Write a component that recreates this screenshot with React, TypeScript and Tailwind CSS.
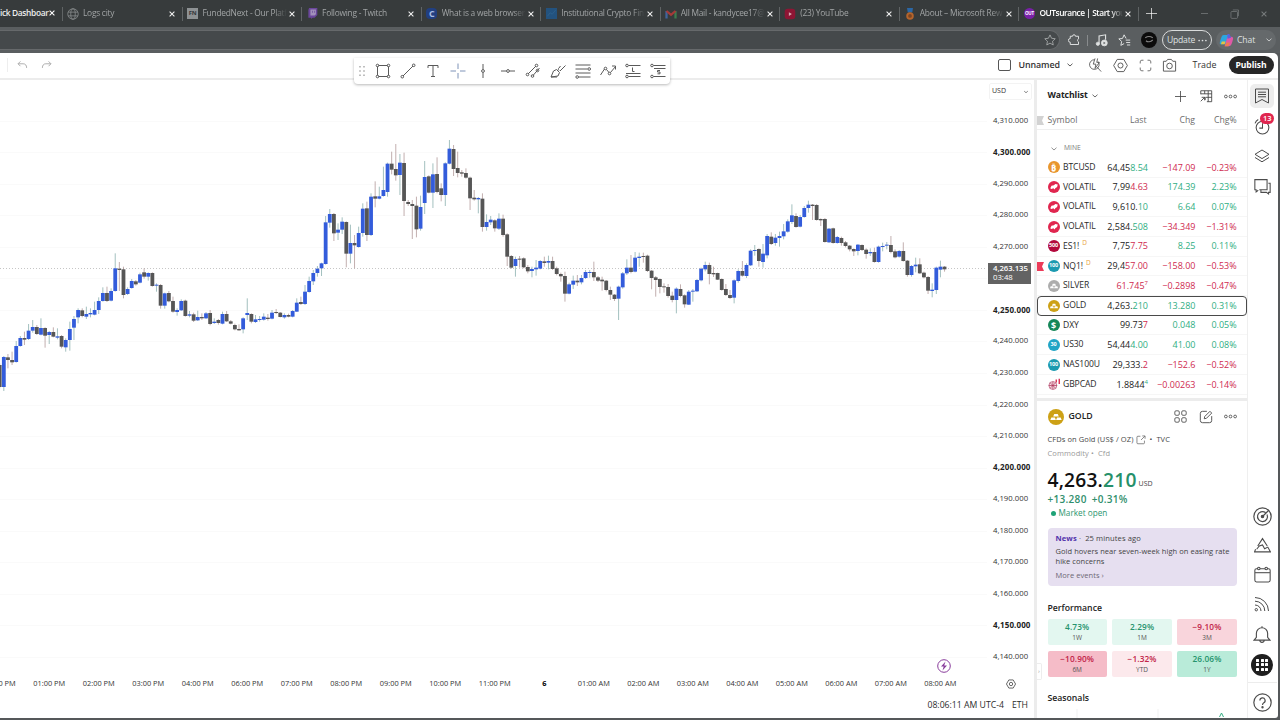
import type { ReactNode } from "react";
import clsx from "clsx";

const tabs = [
  { title: "Logs city", icon: "globe" },
  { title: "FundedNext - Our Platf", icon: "fn" },
  { title: "Following - Twitch", icon: "twitch" },
  { title: "What is a web browser", icon: "c" },
  { title: "Institutional Crypto Fin", icon: "chart" },
  { title: "All Mail - kandycee17@", icon: "gmail" },
  { title: "(23) YouTube", icon: "yt" },
  { title: "About – Microsoft Rew", icon: "medal" },
  { title: "OUTsurance | Start you", icon: "out", active: true },
];

const times = [
  "12:00 PM", "01:00 PM", "02:00 PM", "03:00 PM", "04:00 PM", "06:00 PM", "07:00 PM",
  "08:00 PM", "09:00 PM", "10:00 PM", "11:00 PM", "6", "01:00 AM", "02:00 AM", "03:00 AM",
  "04:00 AM", "05:00 AM", "06:00 AM", "07:00 AM", "08:00 AM",
];

const prices = Array.from({ length: 18 }, (_, i) => 4310 - i * 10);

type Row = {
  symbol: string;
  badge: string;
  color: string;
  last: string;
  tick: string;
  sup?: string;
  tickUp: boolean;
  chg: string;
  pct: string;
  delayed?: boolean;
  flag?: boolean;
};

const rows: Row[] = [
  { symbol: "BTCUSD", badge: "₿", color: "bg-[#e8962e]", last: "64,45", tick: "8.54", tickUp: true, chg: "−147.09", pct: "−0.23%" },
  { symbol: "VOLATIL", badge: "horse", color: "bg-[#e0264f]", last: "7,99", tick: "4.63", tickUp: false, chg: "174.39", pct: "2.23%" },
  { symbol: "VOLATIL", badge: "horse", color: "bg-[#e0264f]", last: "9,610.", tick: "10", tickUp: true, chg: "6.64", pct: "0.07%" },
  { symbol: "VOLATIL", badge: "horse", color: "bg-[#e0264f]", last: "2,584.", tick: "508", tickUp: true, chg: "−34.349", pct: "−1.31%" },
  { symbol: "ES1!", badge: "500", color: "bg-[#b3083c]", last: "7,75", tick: "7.75", tickUp: false, chg: "8.25", pct: "0.11%", delayed: true },
  { symbol: "NQ1!", badge: "100", color: "bg-[#1c9ab0]", last: "29,4", tick: "57.00", tickUp: false, chg: "−158.00", pct: "−0.53%", delayed: true, flag: true },
  { symbol: "SILVER", badge: "bars", color: "bg-[#adadad]", last: "", tick: "61.745", sup: "7", tickUp: false, chg: "−0.2898", pct: "−0.47%" },
  { symbol: "GOLD", badge: "bars", color: "bg-[#cda116]", last: "4,263.", tick: "210", tickUp: true, chg: "13.280", pct: "0.31%" },
  { symbol: "DXY", badge: "$", color: "bg-[#168758]", last: "99.73", tick: "7", tickUp: false, chg: "0.048", pct: "0.05%" },
  { symbol: "US30", badge: "30", color: "bg-[#22a5c6]", last: "54,44", tick: "4.00", tickUp: true, chg: "41.00", pct: "0.08%" },
  { symbol: "NAS100U", badge: "100", color: "bg-[#1c9ab0]", last: "29,333.", tick: "2", tickUp: false, chg: "−152.6", pct: "−0.52%" },
  { symbol: "GBPCAD", badge: "flags", color: "bg-transparent", last: "1.8844", tick: "", sup: "4", tickUp: true, chg: "−0.00263", pct: "−0.14%" },
];

const performance = [
  { value: "4.73%", label: "1W", box: "bg-[#e3f7f0]", text: "text-[#26936d]" },
  { value: "2.29%", label: "1M", box: "bg-[#e3f7f0]", text: "text-[#26936d]" },
  { value: "−9.10%", label: "3M", box: "bg-[#f9d5dc]", text: "text-[#c22448]" },
  { value: "−10.90%", label: "6M", box: "bg-[#f5bcc8]", text: "text-[#c22448]" },
  { value: "−1.32%", label: "YTD", box: "bg-[#fce9ec]", text: "text-[#c22448]" },
  { value: "26.06%", label: "1Y", box: "bg-[#b9ebd9]", text: "text-[#26936d]" },
];

// [open, close, high, low] in thirds of a pixel, measured down from y = 130
const candles = [
  [705,771,700,775],[771,681,678,783],[682,690,672,715],[690,697,665,705],[696,648,633,698],[648,624,618,650],
  [624,629,605,645],[627,602,582,630],[602,591,570,608],[591,612,585,615],[614,594,565,616],[594,617,592,653],
  [615,606,603,642],[606,620,592,622],[623,619,595,628],[618,650,615,655],[652,630,625,665],[630,597,575,662],
  [593,567,558,630],[562,540,535,580],[541,558,535,562],[560,552,530,567],[553,549,535,562],[554,540,515,556],
  [540,513,502,552],[513,489,472,515],[489,513,470,516],[512,483,475,514],[483,415,370,485],[416,420,396,483],
  [418,495,410,505],[492,477,472,495],[474,453,447,476],[454,463,450,467],[458,433,428,460],[427,440,415,446],
  [440,429,427,452],[429,468,427,470],[467,464,460,485],[465,527,462,536],[527,490,488,536],[489,514,483,517],
  [513,545,500,548],[546,540,535,557],[541,513,508,543],[512,558,509,560],[557,553,543,562],[553,572,548,576],
  [571,561,542,573],[561,565,550,570],[565,550,546,567],[549,582,540,586],[579,575,565,582],[570,579,567,584],
  [581,552,545,583],[552,574,543,576],[574,581,570,583],[585,598,581,601],[597,601,583,602],[598,565,562,610],
  [555,549,505,570],[552,575,550,580],[576,568,555,579],[570,567,558,575],[569,560,550,572],[563,567,552,572],
  [566,548,540,568],[546,549,537,552],[548,561,546,562],[562,555,550,566],[555,560,551,562],[560,543,540,562],
  [545,518,505,546],[516,522,500,525],[522,485,465,525],[486,453,440,488],[454,429,420,465],[429,416,408,440],
  [415,400,398,438],[402,277,258,404],[278,252,237,293],[252,310,249,333],[308,299,280,330],[299,275,262,312],
  [276,371,274,412],[371,339,284,400],[339,346,315,415],[351,309,290,353],[309,236,220,320],[235,315,215,333],
  [315,200,190,318],[199,206,154,232],[206,199,170,208],[198,180,110,200],[186,101,98,200],[101,119,65,133],
  [117,136,42,152],[135,98,72,195],[99,213,68,258],[216,222,210,228],[222,228,210,327],[227,298,200,322],
  [296,231,197,302],[219,141,93,252],[139,188,136,190],[188,133,100,234],[132,186,82,190],[175,195,160,214],
  [195,100,97,228],[101,56,30,103],[57,117,45,138],[114,129,65,142],[127,131,120,140],[129,143,115,146],
  [143,205,140,240],[203,208,180,212],[208,204,201,250],[206,291,190,305],[291,276,253,302],[277,269,258,285],
  [271,295,268,305],[296,266,250,300],[266,315,254,320],[313,380,310,408],[378,413,375,416],[408,387,380,440],
  [386,389,378,413],[385,412,382,415],[411,424,405,430],[423,417,410,442],[418,413,390,437],[416,393,390,418],
  [394,399,380,410],[398,393,377,418],[393,417,380,420],[415,432,410,436],[432,439,428,455],[438,491,425,515],
  [491,463,458,493],[464,452,437,477],[452,457,435,468],[457,444,435,463],[444,426,420,447],[429,426,420,443],
  [426,442,395,453],[442,452,438,456],[449,454,440,482],[452,480,450,484],[480,494,470,510],[494,507,492,513],
  [506,470,467,570],[472,430,426,476],[430,413,388,435],[413,426,375,430],[425,383,366,427],[384,380,368,410],
  [378,381,368,398],[377,423,374,426],[422,444,420,478],[442,450,438,500],[447,471,445,490],[469,472,460,488],
  [471,498,462,503],[497,510,485,517],[510,476,472,550],[477,498,463,502],[496,523,493,533],[524,485,480,525],
  [485,482,477,515],[484,450,447,486],[451,416,413,454],[418,405,395,424],[405,432,398,463],[429,433,410,441],
  [429,449,428,450],[447,480,445,482],[477,495,462,498],[495,504,480,507],[503,451,448,520],[453,423,418,458],
  [423,437,393,440],[438,405,400,444],[406,362,358,408],[363,360,345,377],[357,393,355,410],[396,371,342,413],
  [376,318,312,385],[320,342,307,345],[339,323,312,347],[324,318,305,350],[319,304,282,328],[305,274,268,308],
  [276,256,223,282],[258,291,250,293],[290,261,255,292],[261,234,228,263],[234,224,212,248],[224,228,222,270],
  [225,270,222,272],[267,271,265,288],[267,336,264,338],[337,296,294,339],[295,339,293,341],[339,321,318,341],
  [324,339,320,347],[337,348,333,352],[347,358,345,364],[357,364,355,378],[363,344,342,376],[345,360,343,363],
  [359,372,355,386],[370,366,355,378],[366,396,353,398],[396,350,347,398],[350,348,338,364],[347,344,336,358],
  [345,366,318,370],[364,382,358,385],[380,363,360,383],[363,393,337,395],[392,435,390,440],[435,408,405,440],
  [409,404,383,427],[403,430,385,432],[428,442,425,445],[441,482,438,492],[483,479,460,502],[480,413,410,492],
  [419,410,392,442],[410,418,408,425],
];

function Icon({ children, size = 16, className }: { children: ReactNode; size?: number; className?: string }) {
  return (
    <svg
      width={size}
      height={size}
      viewBox="0 0 16 16"
      fill="none"
      stroke="currentColor"
      strokeWidth={1}
      className={clsx("shrink-0", className)}
    >
      {children}
    </svg>
  );
}

function Chevron({ className }: { className?: string }) {
  return (
    <svg width="6" height="4" viewBox="0 0 6 4" fill="none" stroke="currentColor" strokeWidth={0.8} className={className}>
      <path d="M0.5 0.7 3 3 5.5 0.7" />
    </svg>
  );
}

function Dots() {
  return (
    <Icon size={13}>
      <circle cx="2.3" cy="8" r="1.7" />
      <circle cx="8" cy="8" r="1.7" />
      <circle cx="13.7" cy="8" r="1.7" />
    </Icon>
  );
}

function TabIcon({ name }: { name: string }) {
  if (name === "globe")
    return (
      <Icon size={12} className="text-[#8c9092]">
        <circle cx="8" cy="8" r="7" />
        <ellipse cx="8" cy="8" rx="3" ry="7" />
        <path d="M1.5 5.5h13M1.5 10.5h13" />
      </Icon>
    );
  if (name === "fn")
    return <span className="flex h-[11px] w-[11px] items-center justify-center bg-[#8e9294] text-[6px] font-bold text-[#34383a]">FN</span>;
  if (name === "twitch")
    return (
      <Icon size={11}>
        <path d="M3 0h12v10l-4 4H8l-2 2v-2H2V3z" fill="#6b479c" stroke="none" />
        <path d="M5 2h8v7l-2 2H5z" fill="#a191ba" stroke="none" />
        <path d="M8 4v3M11 4v3" stroke="#6b479c" />
      </Icon>
    );
  if (name === "c")
    return <span className="flex h-[11px] w-[11px] items-center justify-center rounded-sm bg-[#213f80] text-[9px] font-bold text-[#a7bde4]">C</span>;
  if (name === "chart")
    return (
      <Icon size={11}>
        <path d="M0 0h16v16H0z" fill="#23527e" stroke="none" />
        <path d="M2 12l4-5 3 2 5-6" stroke="#2f6490" />
      </Icon>
    );
  if (name === "gmail")
    return (
      <Icon size={12}>
        <path d="M2 14V4" stroke="#41649c" strokeWidth={3} />
        <path d="M14 14V4" stroke="#3d7d4e" strokeWidth={3} />
        <path d="M2 4l6 5 6-5" stroke="#a53a38" strokeWidth={3} />
      </Icon>
    );
  if (name === "yt")
    return (
      <Icon size={12}>
        <rect x="1" y="1" width="14" height="14" rx="4" fill="#8e1534" stroke="none" />
        <path d="M6.5 5.5l4 2.5-4 2.5z" fill="#d7a7b1" stroke="none" />
      </Icon>
    );
  if (name === "medal")
    return (
      <Icon size={12}>
        <path d="M4 0h8l-1 6H5z" fill="#2b67a5" stroke="none" />
        <circle cx="8" cy="10.5" r="5" fill="#b5642c" stroke="none" />
        <circle cx="8" cy="10.5" r="2.5" fill="#7c4522" stroke="none" />
      </Icon>
    );
  return <span className="flex h-[11px] w-[11px] items-center justify-center rounded-full bg-[#7a1fa8] text-[4.5px] font-bold text-white">OUT</span>;
}

function CloseX({ className }: { className?: string }) {
  return (
    <svg width="6" height="6" viewBox="0 0 7 7" fill="none" stroke="currentColor" strokeWidth={1.2} className={clsx("shrink-0", className)}>
      <path d="M0.7 0.7l5.6 5.600M6.300 0.700l-5.600 5.600" />
    </svg>
  );
}

function TabBar() {
  return (
    <div className="flex h-[27px] items-center bg-[#373b3c] text-[8.4px] tracking-[-0.25px] text-[#a2a5a6]">
      <div className="flex w-[62px] shrink-0 items-center">
        <span className="w-[45px] whitespace-nowrap font-semibold tracking-[-0.350px] text-[#eceded]">ick Dashboar</span>
        <CloseX className="ml-[4px] text-white" />
      </div>
      {tabs.map((tab) => (
        <div key={tab.title} className="flex h-[14px] w-[119.550px] shrink-0 items-center border-l border-[#606465] pl-[4px]">
          <span className="flex w-[12px] shrink-0 justify-center"><TabIcon name={tab.icon} /></span>
          <span
            className={clsx(
              "ml-[4px] w-[84px] whitespace-nowrap [mask-image:linear-gradient(to_right,black_85%,transparent)]",
              tab.active && "font-semibold tracking-[-0.450px] text-white",
            )}
          >
            {tab.title}
          </span>
          <CloseX className="ml-[2px] text-[#f1f1f1]" />
        </div>
      ))}
      <div className="flex h-[14px] flex-1 items-center border-l border-[#606465] pl-[7px]">
        <Icon size={11} className="text-white"><path d="M8 0v16M0 8h16" /></Icon>
        <span className="ml-[44px] h-px w-[7px] bg-[#686c6d]" />
        <Icon size={10} className="ml-[22px] text-[#85898a]">
          <rect x="1.500" y="4" width="10.500" height="11" rx="1.500" />
          <path d="M4.500 1.500h9v10" />
        </Icon>
        <CloseX className="ml-[21px] text-[#777b7c]" />
      </div>
    </div>
  );
}

function AddressBar() {
  return (
    <div className="flex h-[26px] items-center bg-[#5a5e60] text-[#dfe1e1]">
      <div className="flex h-[20px] w-[1060px] items-center justify-end rounded-r-full border border-l-0 border-[#66696b] bg-[#45494b] pr-[3px]">
        <Icon size={12} className="text-[#b7b9ba]">
          <path d="M8 1.200l2.100 4.500 4.900.6-3.600 3.400.9 4.900L8 12.200l-4.300 2.400.9-4.900L1 6.300l4.900-.6z" />
        </Icon>
      </div>
      <Icon size={12} className="ml-[8px]">
        <path d="M3 3h3a2 2 0 0 1 4 0h4v3.500a2.200 2.200 0 0 0 0 4V14H3v-3a2.200 2.200 0 0 1 0-5z" strokeWidth={1.3} />
      </Icon>
      <span className="ml-[7px] h-[11px] w-px bg-[#888b8d]" />
      <Icon size={13} className="ml-[7px]">
        <path d="M5 12V2.500l8-1.500v6" strokeWidth={1.4} />
        <circle cx="3.500" cy="12" r="2" fill="currentColor" />
        <circle cx="11.500" cy="11" r="3.600" fill="currentColor" />
        <path d="M10.500 9.500v3l2.500-1.500z" fill="#55595b" stroke="none" />
      </Icon>
      <Icon size={13} className="ml-[10px]">
        <path d="M10 5.500L7.500 1 5.500 5.500 1 6l3.500 3.200L3.500 14l4-2.200M9.500 7.500H15M10 10.500h5M11 13.500h4" strokeWidth={1.2} />
      </Icon>
      <div className="ml-[10px] flex h-[16px] w-[16px] items-center justify-center rounded-full bg-[#0b0b0b]">
        <Icon size={12} className="text-[#858585]">
          <path d="M3 5c3-2 7-2 10 0M4 9c2 2 6 2 9-1" strokeWidth={1.5} />
        </Icon>
      </div>
      <div className="ml-[5px] flex h-[20px] w-[50px] items-center justify-center gap-[3px] rounded-full border-[1.500px] border-[#d9dbdb] text-[8.600px] tracking-[-0.200px]">
        Update
        <Icon size={9}>
          <g fill="currentColor" stroke="none"><circle cx="2" cy="8" r="1.500" /><circle cx="8" cy="8" r="1.500" /><circle cx="14" cy="8" r="1.500" /></g>
        </Icon>
      </div>
      <div className="ml-[4px] flex h-[20px] w-[60px] items-center rounded-full bg-[#65696b] pl-[3px] text-[8.600px] tracking-[-0.100px]">
        <Icon size={15}>
          <path d="M5 2h5L7 12H2c-2 0-1-3 0-6s1.500-4 3-4z" fill="#2ba6df" stroke="none" />
          <path d="M3 9h4l-1 3H2z" fill="#e2c442" stroke="none" />
          <path d="M9 4h4c3 0 2 3 1 6s-2 4-4 4H6z" fill="#df59a7" stroke="none" />
          <path d="M9 1h2l2 4-4 1z" fill="#5b62dc" stroke="none" />
          <path d="M8 10h4l-2 4H6z" fill="#ee7b50" stroke="none" />
        </Icon>
        <span className="ml-[3px] w-[25px]">Chat</span>
        <Chevron className="ml-[4px]" />
      </div>
    </div>
  );
}

function DrawingTools() {
  return (
    <div className="absolute left-[354px] top-[5px] flex h-[26px] w-[316px] items-center gap-[9px] rounded-b-[4px] bg-white text-[#5a5a5a] shadow-[0_1px_3px_rgba(0,0,0,0.28)]">
      <Icon className="-mr-[4.500px] text-[#9c9c9c]">
        <path d="M6 3v10M10 3v10" strokeDasharray="1.500 2.700" strokeWidth={1.3} />
      </Icon>
      <Icon>
        <path d="M3.500 2.500h9M3.500 13.500h9M2.500 3.500v9M13.500 3.500v9" />
        <circle cx="2.500" cy="2.500" r="1.300" /><circle cx="13.500" cy="2.500" r="1.300" />
        <circle cx="2.500" cy="13.500" r="1.300" /><circle cx="13.500" cy="13.500" r="1.300" />
      </Icon>
      <Icon>
        <path d="M3 13L13 3" />
        <circle cx="2.300" cy="13.700" r="1.300" /><circle cx="13.700" cy="2.300" r="1.300" />
      </Icon>
      <Icon><path d="M3 5V2.500h10V5M8 2.500v11M6 13.500h4" /></Icon>
      <Icon className="text-[#7f93b8]"><path d="M8 0.500v5.500M8 10v5.500M0.500 8H6M10 8h5.500" /></Icon>
      <Icon><path d="M8 1v5.500M8 9.500V15" /><circle cx="8" cy="8" r="1.400" /></Icon>
      <Icon><path d="M1 8h5.500M9.500 8H15" /><circle cx="8" cy="8" r="1.400" /></Icon>
      <Icon>
        <path d="M3 11l8-8M8 12.500L14.500 5" />
        <circle cx="2.500" cy="11.500" r="1.300" /><circle cx="11.500" cy="2.500" r="1.300" />
        <circle cx="7.500" cy="13" r="1.300" /><circle cx="12.500" cy="7.500" r="1.300" />
      </Icon>
      <Icon>
        <path d="M1 14l2.500-6 3-1.500 3 3L8 13zM1 14h6M9 7.500a1.500 1.500 0 0 1 0-2.500L10.500 3M10 8l5.500-5.500" />
      </Icon>
      <Icon>
        <path d="M0.500 2h15M0.500 6h12M0.500 10h15M4 14h11.500" />
        <circle cx="14.200" cy="6" r="1.300" /><circle cx="2.200" cy="14" r="1.300" />
      </Icon>
      <Icon>
        <path d="M0.500 12l4-6M6.500 6.500L9 9.500M10.500 9.500l5-6M12 3h3.500v3.500" />
        <circle cx="5.500" cy="5.500" r="1.300" /><circle cx="9.500" cy="10.500" r="1.300" />
      </Icon>
      <Icon>
        <path d="M3.500 2.500h12M3.500 13.500h12M1 10.500h14.500M7.500 4.500v4h2" />
        <circle cx="2" cy="2.500" r="1.300" /><circle cx="2" cy="13.500" r="1.300" />
      </Icon>
      <Icon>
        <path d="M3.500 2.500h12M4 5.500h11.500M3.500 13.500h12M10 7.500H7.500v1.500H10v1.800H7.500" />
        <circle cx="2" cy="2.500" r="1.300" /><circle cx="2" cy="13.500" r="1.300" />
      </Icon>
    </div>
  );
}

function TopBar() {
  return (
    <div className="relative flex h-[27px] shrink-0 items-center border-b-2 border-[#ececec] pb-px pr-[4px] text-[8.900px] text-[#333]">
      <span className="ml-[7px] h-[14px] w-px bg-[#eee]" />
      <Icon size={11} className="ml-[9px] text-[#8a8a8a]"><path d="M5 2L1.500 5.500 5 9M2 5.500h7c3 0 5 2 5 6" /></Icon>
      <Icon size={11} className="ml-[13px] text-[#8a8a8a]"><path d="M11 2l3.500 3.500L11 9M14 5.500H7c-3 0-5 2-5 6" /></Icon>
      <DrawingTools />
      <div className="ml-auto flex items-center">
        <span className="h-[12px] w-[13px] rounded-[2px] border border-[#555]" />
        <span className="ml-[8px] w-[40px] font-semibold tracking-[-0.100px]">Unnamed</span>
        <Chevron className="ml-[8px]" />
        <Icon size={14} className="ml-[15px] text-[#555]">
          <path d="M11.500 4a5.500 5.500 0 1 1-4-2M10.500 10.500L15 15.500M8 0.500L6 7h3l-1 5 5-7h-3l1-4.500" />
        </Icon>
        <Icon size={15} className="ml-[11px] text-[#555]">
          <path d="M4.500 1.500h7L15.300 8l-3.800 6.500h-7L0.700 8z" /><circle cx="8" cy="8" r="2.700" />
        </Icon>
        <Icon size={13} className="ml-[11px] text-[#555]">
          <path d="M1.500 5.500v-2a2 2 0 0 1 2-2h2M10.500 1.500h2a2 2 0 0 1 2 2v2M14.500 10.500v2a2 2 0 0 1-2 2h-2M5.500 14.500h-2a2 2 0 0 1-2-2v-2" />
        </Icon>
        <Icon size={15} className="ml-[10px] text-[#555]">
          <path d="M1.500 3.500h3L6 1.500h4l1.500 2h3v10.500h-13z" /><circle cx="8" cy="8.500" r="3" />
        </Icon>
        <span className="ml-[16px] w-[24px] font-medium">Trade</span>
        <span className="ml-[12px] flex h-[18px] w-[45px] items-center justify-center rounded-full bg-[#262626] text-[8.600px] font-bold tracking-[-0.100px] text-white">
          Publish
        </span>
      </div>
    </div>
  );
}

function Chart() {
  return (
    <svg width="987" height="594" viewBox="0 80 987 594" className="block">
      {prices.map((p, i) => (
        <path key={p} d={`M0 ${Math.round(120.5 + i * 31.56) + 0.5}H987`} stroke="#fafafa" />
      ))}
      <path d="M0 268.500H987" stroke="#c6c6c6" strokeDasharray="1 2" />
      {candles.map(([open, close, high, low], i) => {
        const x = -0.3 + i * 4.126;
        const up = close < open;
        const top = 130 + Math.min(open, close) / 3;
        return (
          <g key={i}>
            <path
              d={`M${x} ${130 + high / 3}V${130 + low / 3}`}
              stroke={up ? "#7ba5a3" : "#a88d8d"}
              strokeWidth={0.7}
            />
            <rect
              x={x - 1.9}
              y={top}
              width={3.8}
              height={Math.max(Math.abs(open - close) / 3, 1)}
              fill={up ? "#335cdb" : "#565656"}
            />
          </g>
        );
      })}
      <circle cx="944" cy="666" r="6.300" fill="none" stroke="#8a3d9c" />
      <path d="M945.500 661.500l-4.500 5h2.700l-1.200 4 4.500-5h-2.800z" fill="#8a3d9c" />
    </svg>
  );
}

function PriceScale() {
  return (
    <div className="relative flex w-[47px] flex-col pl-[2px] text-[7.750px] font-medium text-[#333]">
      <div className="mt-[3px] flex h-[17px] w-[43px] items-center justify-between rounded-[2px] border border-[#f3f3f3] pl-[2px] pr-[2px] text-[7px]">
        USD
        <Chevron className="scale-75" />
      </div>
      <div className="mt-[4.700px] pl-[4px]">
        {prices.map((p) => (
          <div key={p} className={clsx("flex h-[31.560px] items-center", p % 50 === 0 && "text-[8px] font-bold text-[#222] tracking-[0.100px]")}>
            {p.toLocaleString("en-US")}.000
          </div>
        ))}
      </div>
      <div className="absolute left-px top-[183px] flex h-[21px] w-[43px] flex-col justify-center bg-[#636363] pl-[5px] text-[7.750px] leading-[9px] text-white">
        <span className="-mt-px font-semibold tracking-[-0.050px]">4,263.135</span>
        <span className="font-normal">03:48</span>
      </div>
    </div>
  );
}

function ChartArea() {
  return (
    <div className="flex w-[1034px] shrink-0 flex-col overflow-hidden">
      <div className="flex h-[594px] overflow-hidden">
        <Chart />
        <PriceScale />
      </div>
      <div className="flex h-[20px] items-center text-[7.400px] font-medium text-[#333]">
        <div className="-ml-[25px] flex w-[1012px] shrink-0">
          {times.map((t) => (
            <span key={t} className={clsx("w-[49.500px] shrink-0 whitespace-nowrap text-center", t === "6" && "font-bold text-black")}>{t}</span>
          ))}
        </div>
        <Icon size={10} className="ml-[19px] text-[#555]">
          <path d="M4.500 1.500h7L15.300 8l-3.800 6.500h-7L0.700 8z" strokeWidth={1.4} /><circle cx="8" cy="8" r="2.700" strokeWidth={1.4} />
        </Icon>
      </div>
      <div className="flex h-[24px] items-center justify-end gap-[8px] pb-px pr-[6px] text-[8.700px] font-medium text-[#2c2c2c]">
        <span>08:06:11 AM UTC-4</span>
        <span>ETH</span>
      </div>
    </div>
  );
}

function Bars({ size }: { size: number }) {
  return (
    <Icon size={size}>
      <path d="M6 4.500h4l1.200 3H4.800zM2.700 8.500h4l1.200 3H1.500zM9.300 8.500h4l1.200 3H8.100z" fill="white" stroke="none" />
    </Icon>
  );
}

function SymbolBadge({ badge, color }: { badge: string; color: string }) {
  return (
    <span className={clsx("flex h-[12px] w-[12px] shrink-0 items-center justify-center rounded-full text-white", color)}>
      {badge === "horse" && (
        <Icon size={10}>
          <path d="M2 10l2-4 4-1 2-2 4 1-1 4-3 2-1 2-2-2-3 1z" fill="white" stroke="none" />
        </Icon>
      )}
      {badge === "bars" && <Bars size={10} />}
      {badge === "flags" && (
        <Icon size={12}>
          <circle cx="6.500" cy="10" r="5.300" fill="#f5dfe5" stroke="#b8577a" />
          <path d="M1 10h11M6.500 5v10M3 6.500l7 7M10 6.500l-7 7" stroke="#b03a5e" />
          <path d="M11 2v4M15 1v7" stroke="#d8274d" strokeWidth={1.8} />
        </Icon>
      )}
      {(badge === "₿" || badge === "$") && <span className="text-[9px] font-bold leading-none">{badge}</span>}
      {/^\d/.test(badge) && <span className="text-[5.500px] font-bold leading-none tracking-[-0.200px]">{badge}</span>}
    </span>
  );
}

const tone = (up: boolean) => (up ? "text-[#2fae82]" : "text-[#cf2a50]");

function WatchRow({ row }: { row: Row }) {
  const up = !row.chg.startsWith("−");
  const selected = row.symbol === "GOLD";
  return (
    <div
      className={clsx(
        "relative flex h-[19.720px] items-center pr-[10px] text-[9px] font-medium",
        selected ? "rounded-[4px] outline outline-[#4a4a4a] -outline-offset-1" : "border-b border-[#f6f6f6]",
      )}
    >
      {row.flag && (
        <svg width="7" height="9" viewBox="0 0 7 9" className="absolute left-0 top-[5px]">
          <path d="M0 0h7L5 4.500 7 9H0z" fill="#ec3b59" />
        </svg>
      )}
      <span className="ml-[10.500px] flex"><SymbolBadge badge={row.badge} color={row.color} /></span>
      <span className="ml-[3.500px] flex w-[34px] whitespace-nowrap text-[8.600px] tracking-[-0.100px] text-[#2a2a2a]">
        {row.symbol}
        {row.delayed && <span className="-mt-[2px] ml-[3px] text-[6.500px] text-[#e8a33c]">D</span>}
      </span>
      <span className="flex w-[51px] justify-end text-[#222]">
        {row.last}
        <span className={tone(row.tickUp)}>{row.tick}</span>
        {row.sup && <span className={clsx("text-[6px]", tone(row.tickUp))}>{row.sup}</span>}
      </span>
      <span className={clsx("w-[47.500px] text-right", tone(up))}>{row.chg}</span>
      <span className={clsx("flex-1 text-right", tone(up))}>{row.pct}</span>
    </div>
  );
}

function Watchlist() {
  return (
    <div className="h-[318px] shrink-0">
      <div className="flex h-[32px] items-center pl-[10.500px] pr-[10px] text-[#444]">
        <span className="w-[40px] text-[8.700px] font-bold tracking-[-0.100px] text-[#222]">Watchlist</span>
        <Chevron className="ml-[4px]" />
        <Icon size={11} className="ml-auto"><path d="M8 0v16M0 8h16" strokeWidth={1.2} /></Icon>
        <Icon size={14} className="ml-[13px] mr-[11px]">
          <path d="M2 6V2h12.500v12.500H9M2 5.500h12.500M6.500 2v3.500M10.500 2v12.500M8 9.500h6.500M7 9v3.500M2 14l4.500-4.500M3 9.500h3.500V13" />
        </Icon>
        <Dots />
      </div>
      <div className="relative flex h-[18px] items-center border-b border-[#efefef] pl-[10.500px] pr-[10px] pt-px text-[8.700px] text-[#6c6c6c]">
        <svg width="7" height="9" viewBox="0 0 7 9" className="absolute left-0 top-[4px]">
          <path d="M0 0h7L5 4.500 7 9H0z" fill="#d2d2d2" />
        </svg>
        <span className="w-[46px]">Symbol</span>
        <span className="w-[53px] text-right">Last</span>
        <span className="w-[48.500px] text-right">Chg</span>
        <span className="flex-1 text-right">Chg%</span>
      </div>
      <div className="mt-[9px] flex h-[19px] items-center pl-[13.500px] text-[6.700px] text-[#777]">
        <Chevron />
        <span className="ml-[7.500px]">MINE</span>
      </div>
      {rows.map((row, i) => (
        <WatchRow key={i} row={row} />
      ))}
    </div>
  );
}

function Details() {
  return (
    <div className="flex flex-1 flex-col overflow-hidden border-t-[3px] border-[#ececec] pl-[10.500px] pr-[10px]">
      <div className="flex h-[31px] items-center text-[#444]">
        <span className="flex h-[16px] w-[16px] items-center justify-center rounded-full bg-[#cda116]"><Bars size={14} /></span>
        <span className="ml-[5px] text-[8.700px] font-semibold text-[#222]">GOLD</span>
        <Icon size={13} className="ml-auto">
          <rect x="1" y="1" width="5.500" height="5.500" rx="1.500" /><rect x="9.500" y="1" width="5.500" height="5.500" rx="1.500" />
          <rect x="1" y="9.500" width="5.500" height="5.500" rx="1.500" /><rect x="9.500" y="9.500" width="5.500" height="5.500" rx="1.500" />
        </Icon>
        <Icon size={14} className="ml-[12px] mr-[11px]">
          <path d="M9 1.500H4A2.500 2.500 0 0 0 1.500 4v8A2.500 2.500 0 0 0 4 14.500h8a2.500 2.500 0 0 0 2.500-2.500V7M6 10l.5-2.500 6-6 2 2-6 6z" />
        </Icon>
        <Dots />
      </div>
      <div className="flex h-[15px] items-center whitespace-nowrap text-[7.500px] tracking-[0.080px] text-[#484848]">
        CFDs on Gold (US$ / OZ)
        <Icon size={10} className="ml-[3px]">
          <path d="M7 2H3a1.500 1.500 0 0 0-1.500 1.500v9A1.500 1.500 0 0 0 3 14h9a1.500 1.500 0 0 0 1.500-1.500V9M10 1.500h4.500V6M14 2L8 8" />
        </Icon>
        <span className="ml-[3px]">•&nbsp; TVC</span>
      </div>
      <div className="flex h-[14px] items-center text-[7.500px] tracking-[0.100px] text-[#999]">Commodity&nbsp;•&nbsp; Cfd</div>
      <div className="mt-[6px] flex h-[26px] items-center text-[19.200px] font-semibold tracking-[0.200px] text-[#111]">
        4,263.<span className="text-[#26906a]">210</span>
        <span className="ml-[2px] mt-[8px] text-[7px] font-normal tracking-normal text-[#444]">USD</span>
      </div>
      <div className="flex h-[13px] items-center gap-[5px] text-[10px] font-semibold tracking-[0.300px] text-[#2f8f6c]">
        <span>+13.280</span>
        <span>+0.31%</span>
      </div>
      <div className="flex h-[14px] items-center pl-[3px] text-[8.200px] font-medium text-[#2c9670]">
        <span className="mr-[3px] h-[5px] w-[5px] rounded-full bg-[#1fa377]" />
        Market open
      </div>
      <div className="mt-[7.500px] h-[58.500px] shrink-0 rounded-[4px] bg-[#e6dff0] px-[8px] pt-[5px] text-[7.500px] leading-[10.500px] tracking-[0.050px] text-[#444]">
        <p className="text-[7.600px] font-medium tracking-[0.100px]">
          <span className="font-bold text-[#5232ab]">News</span>&nbsp;·&nbsp; 25 minutes ago
        </p>
        <p className="mt-[2.500px] whitespace-nowrap">
          Gold hovers near seven-week high on easing rate
          <br />
          hike concerns
        </p>
        <p className="mt-[3px] text-[#6d6875]">More events ›</p>
      </div>
      <h3 className="mt-[14.500px] text-[8.700px] font-semibold leading-[14px] text-[#222]">Performance</h3>
      <div className="mt-[4px] grid shrink-0 grid-cols-3 gap-x-[5.500px] gap-y-[6px]">
        {performance.map((p) => (
          <div key={p.label} className={clsx("flex h-[26px] flex-col items-center justify-center rounded-[2px]", p.box)}>
            <span className={clsx("mt-[-1px] text-[8.300px] font-semibold leading-[13px] tracking-[0.100px]", p.text)}>{p.value}</span>
            <span className="text-[6.500px] font-medium leading-[10px] text-[#555]">{p.label}</span>
          </div>
        ))}
      </div>
      <h3 className="mt-[14.500px] text-[8.700px] font-semibold leading-[14px] text-[#222]">Seasonals</h3>
      <svg width="189" height="13" viewBox="0 0 189 13" className="shrink-0" fill="none">
        <path d="M29 4v9M110 4v9" stroke="#f1f1f1" />
        <path d="M171.500 12l2-4 2 4" stroke="#35ae83" />
      </svg>
    </div>
  );
}

function RailItem({ children }: { children: ReactNode }) {
  return <div className="relative flex h-[29.700px] w-full shrink-0 items-center justify-center">{children}</div>;
}

function Rail() {
  return (
    <div className="flex w-[30px] shrink-0 flex-col border-l border-[#efefef] pt-[1px] text-[#4c4c4c]">
      <RailItem>
        <span className="flex h-[24px] w-[24px] items-center justify-center rounded-[5px] bg-[#ededed]">
          <Icon><path d="M1.500 1h13v14L8 11.500 1.500 15zM4 4.200h8M4 6.500h8M4 8.800h8" /></Icon>
        </span>
      </RailItem>
      <RailItem>
        <Icon size={17} className="mt-[1px]"><circle cx="8" cy="9" r="6" /><path d="M8 5v4.500H5M1 5a6 6 0 0 1 3-3.500" /></Icon>
        <span className="absolute left-[12.500px] top-[2.500px] flex h-[11px] w-[14px] items-center justify-center rounded-full bg-[#e0264f] text-[7.500px] font-semibold text-white">13</span>
      </RailItem>
      <RailItem><Icon className="mt-[2px]"><path d="M8 2l7 4.300-7 4.300-7-4.300zM1 9.500l7 4.300 7-4.300" /></Icon></RailItem>
      <RailItem>
        <Icon size={17} className="mt-[4px]"><path d="M4 11.500L2 13V11H0.800V1.500h11.500V11H5M13.500 5H15.200v8.500h-1.500V15l-2-1.500H6.500V11.500" /></Icon>
      </RailItem>
      <div className="h-[301.500px] shrink-0" />
      <RailItem>
        <Icon size={19}><circle cx="8" cy="8" r="7.300" /><path d="M10.500 4.700a4.200 4.200 0 1 0 1.300 1.600M8 8l5.500-5.500" /><circle cx="8" cy="8" r="1" fill="currentColor" /></Icon>
      </RailItem>
      <RailItem>
        <Icon size={17}><path d="M3.500 8.500L8 1.500l4.500 7M1.500 11.500L0.500 14h15L13 9.500 10 11 8 7.500 5 8.500 2.500 11.500" /></Icon>
      </RailItem>
      <RailItem>
        <Icon size={17} className="-mt-[2px]"><rect x="0.800" y="2.500" width="14.400" height="12.500" rx="1.500" /><path d="M1 6.300h14" /><circle cx="4.500" cy="2.300" r="1.200" fill="white" /><circle cx="11.500" cy="2.300" r="1.200" fill="white" /></Icon>
      </RailItem>
      <RailItem>
        <Icon size={16} className="-mt-[2px]"><path d="M1 1.500A13.500 13.500 0 0 1 14.500 15M1 5.200A9.800 9.800 0 0 1 10.800 15M1 9a6 6 0 0 1 6 6" /><circle cx="2.300" cy="13.700" r="1.200" /></Icon>
      </RailItem>
      <RailItem>
        <Icon size={18}><path d="M1 12.500h14L13 10V6.500a5 5 0 0 0-10 0V10zM6 12.500a2 2 0 0 0 4 0M8 1.500V0.300" /></Icon>
      </RailItem>
      <RailItem>
        <span className="flex h-[22px] w-[22px] items-center justify-center rounded-full bg-[#1f1f1f]">
          <span className="grid grid-cols-3 gap-[1.500px]">
            {Array.from({ length: 9 }, (_, i) => (
              <span key={i} className="h-[3px] w-[3px] rounded-[0.500px] bg-white" />
            ))}
          </span>
        </span>
      </RailItem>
      <div className="mb-[4px] mt-[3px] h-px shrink-0 bg-[#ececec]" />
      <RailItem>
        <Icon size={19}>
          <circle cx="8" cy="8" r="7.300" />
          <path d="M5.800 6.300a2.200 2.200 0 1 1 3.300 1.900c-.8.500-1.100.9-1.100 2" />
          <circle cx="8" cy="12" r="0.500" fill="currentColor" />
        </Icon>
      </RailItem>
    </div>
  );
}

export default function App() {
  return (
    <div className="flex h-[720px] w-[1280px] flex-col overflow-hidden bg-[#55585a] pb-[2px] font-['Open_Sans','Noto_Sans',sans-serif]">
      <TabBar />
      <AddressBar />
      <div className="flex min-h-0 w-[1277.500px] flex-1 flex-col overflow-hidden rounded-tr-[5px] rounded-br-[3px] bg-white">
        <TopBar />
        <div className="flex min-h-0 flex-1">
          <ChartArea />
          <div className="flex w-[3px] shrink-0 bg-[#ececec]" />
          <div className="relative flex w-[209.700px] shrink-0 flex-col">
            <Watchlist />
            <Details />
            <div className="absolute left-0 top-[583px] flex h-[17px] w-[5px] items-center justify-center rounded-r-[2px] border border-l-0 border-[#ededed] text-[6px] text-[#999]">›</div>
          </div>
          <Rail />
        </div>
      </div>
    </div>
  );
}
